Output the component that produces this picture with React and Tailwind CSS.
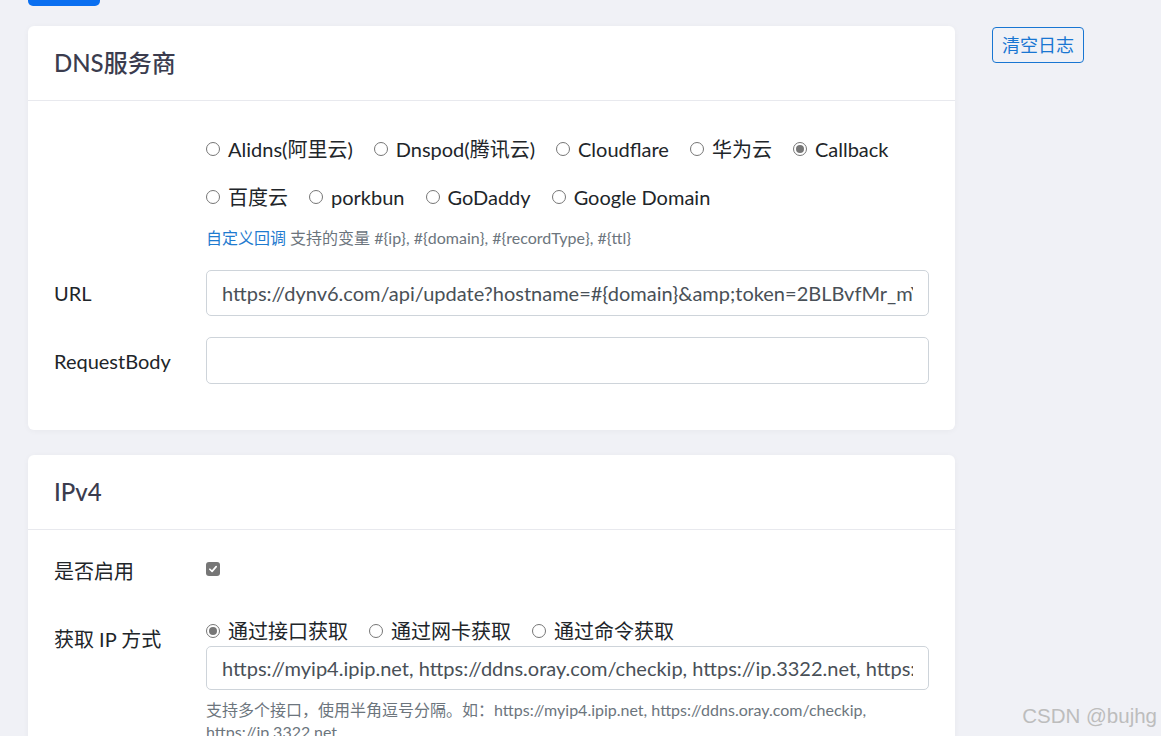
const FONT = "font-['Segoe_UI','Lato','Noto_Sans_CJK_SC',sans-serif]";

function Radio({ label, checked }) {
  return (
    <label className="inline-flex items-center mr-[21px] text-[20px] leading-[30px] text-[#212529]">
      <span className="w-[14px] h-[14px] rounded-full border border-[#767676] bg-white flex items-center justify-center mr-[8px]">
        {checked && <span className="w-[8px] h-[8px] rounded-full bg-[#767676]" />}
      </span>
      {label}
    </label>
  );
}

function Card({ title, children, bodyTop = 'pt-[24px]' }) {
  return (
    <div className="bg-white rounded-[6px] shadow-[0_1px_6px_rgba(0,0,0,0.04)]">
      <div className="h-[75px] flex items-center px-[26px] border-b border-[#e8e9ee]">
        <h5 className="text-[24px] text-[#3b3c4e] font-medium">{title}</h5>
      </div>
      <div className={`px-[26px] ${bodyTop} pb-[26px]`}>{children}</div>
    </div>
  );
}

function Field({ value, h = 'h-[46px]' }) {
  return (
    <input
      readOnly
      defaultValue={value}
      className={`w-full ${h} border border-[#ced4da] rounded-[5px] px-[15px] text-[20px] text-[#495057] outline-none bg-white ${FONT}`}
    />
  );
}

export default function App() {
  const dns1 = ['Alidns(阿里云)', 'Dnspod(腾讯云)', 'Cloudflare', '华为云', 'Callback'];
  const dns2 = ['百度云', 'porkbun', 'GoDaddy', 'Google Domain'];

  return (
    <div className={`relative h-[736px] overflow-hidden bg-[#f0f1f6] ${FONT}`}>
      <div className="flex gap-[37px] pl-[28px]">
        <div className="w-[927px]">
          <button className="block w-[72px] h-[40px] -mt-[34px] rounded-[5px] bg-[#0a6ff0]" />
          <div className="mt-[20px]">
            <Card title="DNS服务商">
              <div className="pl-[152px]">
                <div className="h-[48px] flex items-center">
                  {dns1.map((d) => (
                    <Radio key={d} label={d} checked={d === 'Callback'} />
                  ))}
                </div>
                <div className="h-[48px] flex items-center">
                  {dns2.map((d) => (
                    <Radio key={d} label={d} />
                  ))}
                </div>
                <p className="mt-[5px] text-[16px] leading-[24px] text-[#6c757d]">
                  <span className="text-[#1f7bcf]">自定义回调</span> 支持的变量 #{'{ip}'}, #{'{domain}'}, #{'{recordType}'}, #{'{ttl}'}
                </p>
              </div>
              <div className="mt-[20px] flex items-center">
                <span className="w-[152px] text-[20px] text-[#212529]">URL</span>
                <div className="flex-1">
                  <Field value={'https://dynv6.com/api/update?hostname=#{domain}&amp;token=2BLBvfMr_mYbZ8sKq3xVnT'} />
                </div>
              </div>
              <div className="mt-[21px] mb-[20px] flex items-center">
                <span className="w-[152px] text-[20px] text-[#212529]">RequestBody</span>
                <div className="flex-1">
                  <Field value="" h="h-[47px]" />
                </div>
              </div>
            </Card>
          </div>
          <div className="mt-[25px]">
            <Card title="IPv4" bodyTop="pt-[26px]">
              <div className="flex items-center h-[30px]">
                <span className="w-[152px] text-[20px] text-[#212529]">是否启用</span>
                <span className="w-[14px] h-[14px] -mt-[4px] rounded-[3px] bg-[#767676] flex items-center justify-center">
                  <svg viewBox="0 0 12 12" className="w-[10px] h-[10px]">
                    <path d="M2.2 6.3 L4.9 8.9 L9.8 3.2" fill="none" stroke="white" strokeWidth="2" strokeLinecap="round" strokeLinejoin="round" />
                  </svg>
                </span>
              </div>
              <div className="mt-[30px] flex">
                <span className="w-[152px] pt-[8px] text-[20px] leading-[30px] text-[#212529]">获取 IP 方式</span>
                <div className="flex-1">
                  <div className="flex items-center">
                    <Radio label="通过接口获取" checked />
                    <Radio label="通过网卡获取" />
                    <Radio label="通过命令获取" />
                  </div>
                  <Field value="https://myip4.ipip.net, https://ddns.oray.com/checkip, https://ip.3322.net, https://4.ipw.cn" h="h-[44px]" />
                  <p className="mt-[9px] text-[16px] leading-[22px] text-[#6c757d]">
                    支持多个接口，使用半角逗号分隔。如：https://myip4.ipip.net, https://ddns.oray.com/checkip, https://ip.3322.net
                  </p>
                </div>
              </div>
            </Card>
          </div>
        </div>
        <div className="pt-[27px]">
          <button className="h-[36px] px-[9px] border border-[#1976d2] rounded-[4px] text-[18px] leading-none text-[#1976d2] bg-transparent">
            清空日志
          </button>
        </div>
      </div>
      <div className="absolute right-[4px] bottom-[6px] font-['Liberation_Sans',sans-serif] text-[20.5px] leading-[28px] text-[#bdbdbd]">
        CSDN @bujhg
      </div>
    </div>
  );
}
